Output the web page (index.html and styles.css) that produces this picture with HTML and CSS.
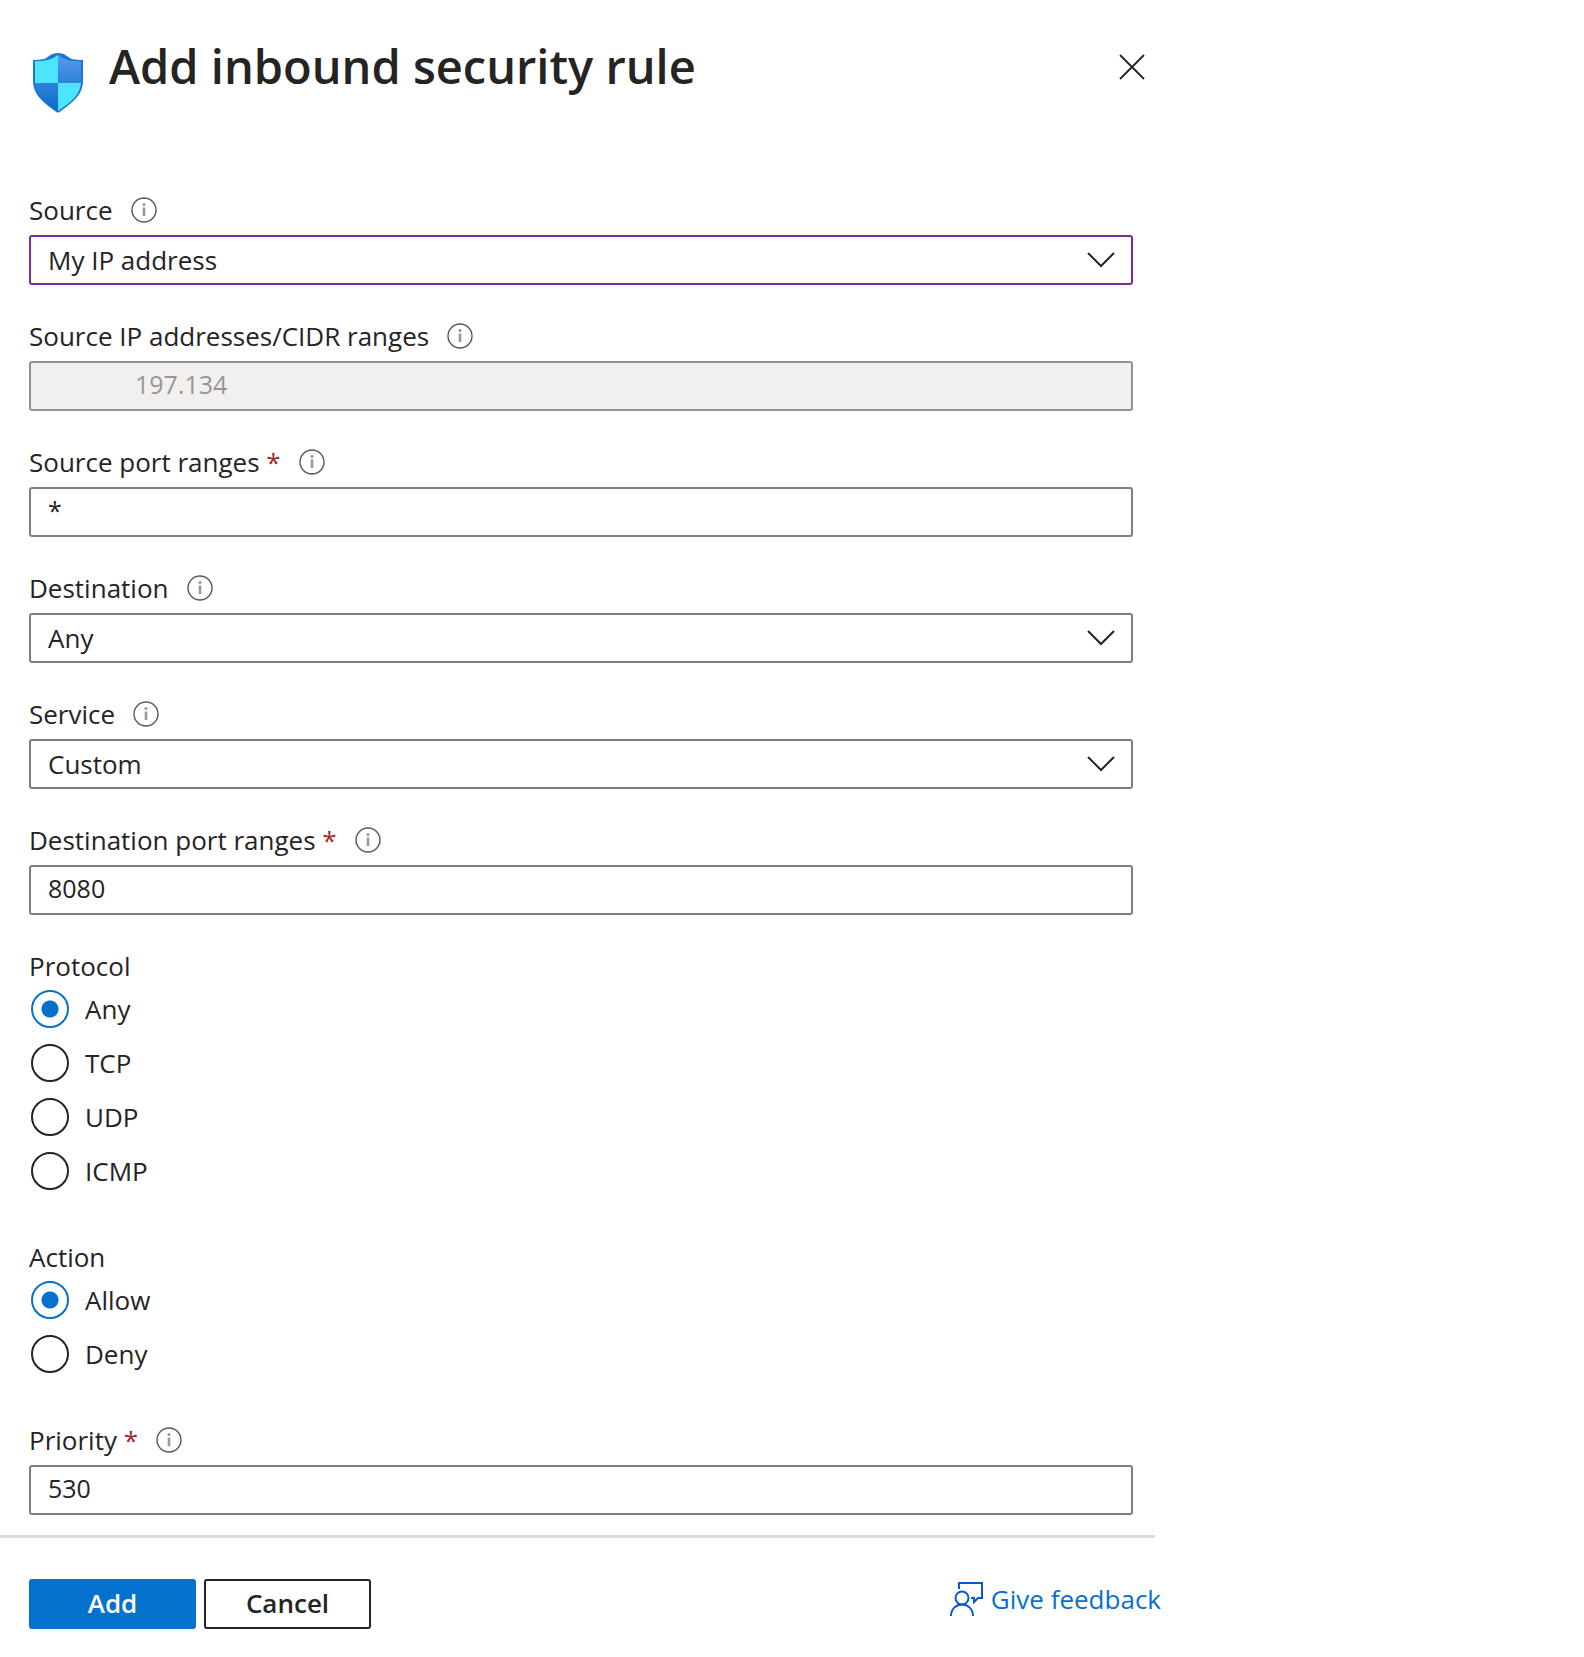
FILE: index.html
```html
<!DOCTYPE html>
<html lang="en">
<head>
<meta charset="utf-8">
<meta name="viewport" content="width=device-width, initial-scale=1">
<title>Add inbound security rule</title>
<link rel="stylesheet" href="styles.css">
</head>
<body>
<svg class="sprite" aria-hidden="true">
  <symbol id="info" viewBox="0 0 26 26">
    <circle cx="13" cy="13" r="12" fill="none" stroke="#5a5856" stroke-width="1.4"/>
    <path d="M13 10.500v8.500" stroke="#9a9896" stroke-width="2.600"/>
    <circle cx="13" cy="7.500" r="1.500" fill="#9a9896"/>
  </symbol>
  <symbol id="chevron" viewBox="0 0 28 16">
    <path d="M1 1l13 13L27 1" fill="none" stroke="#252423" stroke-width="2"/>
  </symbol>
</svg>
<main class="panel">
  <header class="header">
    <svg class="shield" viewBox="0 0 50 60" aria-hidden="true">
      <defs>
        <linearGradient id="shade" x1="0" y1="0" x2="0" y2="1">
          <stop offset="0" stop-color="#5a9cec"/>
          <stop offset="1" stop-color="#0668c8"/>
        </linearGradient>
        <clipPath id="inner"><path d="M2 8Q16 9 25 2Q34 9 48 8V28C48 42 37 50 25 58C13 50 2 42 2 28Z"/></clipPath>
      </defs>
      <path d="M0 7Q7 7 11 6C16 4 18 0 25 0C32 0 34 4 39 6Q43 7 50 7V28C50 43 37 51 28 58Q25 61 22 58C13 51 0 43 0 28Z" fill="#1a78d4"/>
      <g clip-path="url(#inner)">
        <path d="M0 0h50v60H0z" fill="url(#shade)"/>
        <path d="M0 0h25v30H0zM25 30h25v30H25z" fill="#4de4ff"/>
      </g>
    </svg>
    <h1 class="title">Add inbound security rule</h1>
    <button class="close" type="button" aria-label="Close">
      <svg class="close-icon" viewBox="0 0 26 26" aria-hidden="true"><path d="M1 1l24 24M25 1L1 25" stroke="#252423" stroke-width="1.800"/></svg>
    </button>
  </header>
  <form class="form" id="rule">
    <div class="field">
      <div class="caption"><label for="source">Source</label><svg class="info"><use href="#info"/></svg></div>
      <div class="picker">
        <select class="control select active" id="source"><option>My IP address</option></select>
        <svg class="chevron"><use href="#chevron"/></svg>
      </div>
    </div>
    <div class="field">
      <div class="caption"><label for="cidr">Source IP addresses/CIDR ranges</label><svg class="info"><use href="#info"/></svg></div>
      <input class="control input masked" id="cidr" type="text" value="197.134" disabled>
    </div>
    <div class="field">
      <div class="caption"><label for="sport">Source port ranges <span class="required">*</span></label><svg class="info"><use href="#info"/></svg></div>
      <input class="control input" id="sport" type="text" value="*">
    </div>
    <div class="field">
      <div class="caption"><label for="dest">Destination</label><svg class="info"><use href="#info"/></svg></div>
      <div class="picker">
        <select class="control select" id="dest"><option>Any</option></select>
        <svg class="chevron"><use href="#chevron"/></svg>
      </div>
    </div>
    <div class="field">
      <div class="caption"><label for="service">Service</label><svg class="info"><use href="#info"/></svg></div>
      <div class="picker">
        <select class="control select" id="service"><option>Custom</option></select>
        <svg class="chevron"><use href="#chevron"/></svg>
      </div>
    </div>
    <div class="field">
      <div class="caption"><label for="dport">Destination port ranges <span class="required">*</span></label><svg class="info"><use href="#info"/></svg></div>
      <input class="control input" id="dport" type="text" value="8080">
    </div>
    <fieldset class="group">
      <legend class="legend">Protocol</legend>
      <div class="options">
        <label class="option"><input class="radio" type="radio" name="protocol" checked>Any</label>
        <label class="option"><input class="radio" type="radio" name="protocol">TCP</label>
        <label class="option"><input class="radio" type="radio" name="protocol">UDP</label>
        <label class="option"><input class="radio" type="radio" name="protocol">ICMP</label>
      </div>
    </fieldset>
    <fieldset class="group">
      <legend class="legend">Action</legend>
      <div class="options">
        <label class="option"><input class="radio" type="radio" name="action" checked>Allow</label>
        <label class="option"><input class="radio" type="radio" name="action">Deny</label>
      </div>
    </fieldset>
    <div class="field">
      <div class="caption"><label for="priority">Priority <span class="required">*</span></label><svg class="info"><use href="#info"/></svg></div>
      <input class="control input" id="priority" type="text" value="530">
    </div>
  </form>
  <footer class="footer">
    <button class="button primary" type="submit" form="rule">Add</button>
    <button class="button" type="button">Cancel</button>
    <a class="feedback" href="#feedback">
      <svg class="feedback-icon" viewBox="0 0 34 35" aria-hidden="true">
        <g fill="none" stroke="#0b57d0" stroke-width="2">
          <path d="M9 7V1h23v15h-4l-4 4v-4h-3"/>
          <circle cx="12" cy="16" r="6.500"/>
          <path d="M1 34c0-7 5-11.500 11-11.500S23 27 23 34"/>
        </g>
      </svg>
      Give feedback
    </a>
  </footer>
</main>
</body>
</html>
```
FILE: styles.css
```css
* {
  box-sizing: border-box;
}

body {
  margin: 0;
  background: #fff;
  color: #252423;
  font: 26px/34px "Open Sans", "Noto Sans", sans-serif;
}

.sprite {
  display: none;
}

.panel {
  max-width: 1155px;
}

.header {
  display: flex;
  align-items: flex-start;
  padding: 32px 10px 0 33px;
}

.shield {
  width: 50px;
  height: 60px;
  margin-top: 21px;
}

.title {
  flex: 1;
  margin: 0 0 0 26px;
  font-size: 47px;
  line-height: 68px;
  font-weight: 600;
}

.close {
  display: flex;
  margin-top: 12px;
  padding: 10px 0;
  border: 0;
  background: none;
}

.close-icon {
  width: 26px;
  height: 26px;
}

.form {
  display: flex;
  flex-direction: column;
  gap: 34px;
  padding: 80px 22px 20px 29px;
}

.field {
  display: flex;
  flex-direction: column;
  gap: 8px;
}

.caption {
  display: flex;
  align-items: center;
  gap: 18px;
}

.required {
  color: #a4262c;
}

.info {
  width: 26px;
  height: 26px;
}

.control {
  width: 100%;
  height: 50px;
  margin: 0;
  padding: 0 17px;
  border: 2px solid #7f7f7f;
  border-radius: 3px;
  background: #fff;
  color: inherit;
  font: inherit;
  outline: 0;
}

.input {
  padding-bottom: 4px;
  font-size: 25px;
}

.select {
  grid-area: 1 / 1;
  appearance: none;
}

.active {
  border-color: #7f2a9b;
}

.masked {
  padding-left: 104px;
  border-color: #929292;
  background: #f1f0ee;
  color: #979593;
}

.picker {
  display: grid;
  align-items: center;
}

.chevron {
  grid-area: 1 / 1;
  justify-self: end;
  width: 28px;
  height: 16px;
  margin-right: 18px;
  pointer-events: none;
}

.group {
  margin: 0 0 16px;
  padding: 0;
  border: 0;
}

.legend {
  padding: 0;
}

.options {
  display: flex;
  flex-direction: column;
  align-items: flex-start;
  gap: 16px;
  padding: 7px 0 0 2px;
}

.option {
  display: flex;
  align-items: center;
  gap: 16px;
}

.radio {
  appearance: none;
  width: 38px;
  height: 38px;
  margin: 0;
  border: 2px solid #252423;
  border-radius: 50%;
}

.radio:checked {
  border-color: #0571ce;
  background: radial-gradient(circle, #0571ce 8px, transparent 9px);
}

.footer {
  display: flex;
  align-items: center;
  gap: 8px;
  padding: 41px 0 28px 29px;
  border-top: 3px solid #dddad8;
}

.button {
  width: 167px;
  height: 50px;
  padding: 0 0 2px;
  border: 2px solid #252423;
  border-radius: 3px;
  background: #fff;
  color: inherit;
  font: inherit;
  font-weight: 600;
}

.primary {
  border-color: #0571ce;
  background: #0571ce;
  color: #fff;
}

.feedback {
  display: flex;
  align-items: center;
  gap: 7px;
  margin: 0 -6px 10px auto;
  color: #0571ce;
  text-decoration: none;
}

.feedback-icon {
  width: 34px;
  height: 35px;
}
```
